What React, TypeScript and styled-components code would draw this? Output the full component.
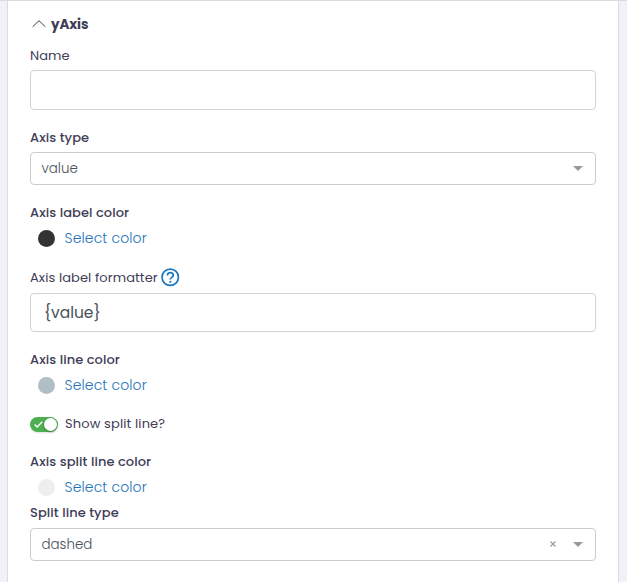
import React from "react";
import styled, { createGlobalStyle } from "styled-components";

const GlobalStyle = createGlobalStyle`
  * { box-sizing: border-box; }
  body {
    margin: 0;
    background: #f1f2f7;
    color: #3f3d56;
    font-family: Poppins, Inter, "Open Sans", sans-serif;
    font-feature-settings: "cv11";
    overflow: hidden;
  }
`;

const Page = styled.div`
  height: 582px;
  padding: 0 8px 0 7px;
  border-top: 1px solid #dcdcdf;
`;

const Panel = styled.main`
  height: 581px;
  padding: 13px 22px 0;
  background: #fff;
  border: solid #dcdcdf;
  border-width: 0 1px;
`;

const Header = styled.header`
  display: flex;
  align-items: center;
  gap: 5px;
  height: 20px;
  padding-left: 2px;
`;

const Title = styled.h2`
  margin: 0;
  padding-top: 2px;
  font-size: 13.5px;
  font-weight: 700;
  line-height: 20px;
  letter-spacing: -0.1px;
`;

const Label = styled.div<{ $top: number; $medium?: boolean }>`
  display: flex;
  align-items: center;
  gap: 3px;
  height: 20px;
  margin-top: ${(p) => p.$top}px;
  font-size: 13px;
  font-weight: ${(p) => (p.$medium ? 500 : 400)};
  letter-spacing: ${(p) => (p.$medium ? 0.07 : 0.09)}px;
  white-space: nowrap;
`;

const Input = styled.input<{ $top: number; $height: number }>`
  display: block;
  width: 100%;
  height: ${(p) => p.$height}px;
  margin-top: ${(p) => p.$top}px;
  padding: 0 13px;
  border: 1px solid #ced4da;
  border-radius: 4px;
  background: #fff;
  color: #495057;
  font: inherit;
  font-feature-settings: inherit;
  font-size: 15.5px;
  letter-spacing: -0.05px;
  outline: none;
`;

const Select = styled.div<{ $top: number }>`
  display: flex;
  align-items: center;
  height: 33px;
  margin-top: ${(p) => p.$top}px;
  padding: 0 12px 0 10.5px;
  border: 1px solid #ccc;
  border-radius: 4px;
  color: #495057;
`;

const SelectValue = styled.span`
  flex: 1;
  font-size: 13.4px;
  font-weight: 300;
`;

const ClearIcon = styled.svg`
  margin: 0 17px 2px 0;
`;

const HelpIcon = styled.svg`
  margin-bottom: 2px;
`;

const ColorRow = styled.div<{ $top: number }>`
  display: flex;
  align-items: center;
  gap: 9.5px;
  height: 20px;
  margin-top: ${(p) => p.$top}px;
  padding-left: 8px;
`;

const Dot = styled.span<{ $color: string }>`
  width: 17px;
  height: 17px;
  border-radius: 50%;
  background: ${(p) => p.$color};
`;

const ColorLink = styled.a`
  color: #2372b9;
  font-size: 14px;
  font-weight: 300;
  line-height: 20px;
  letter-spacing: 0.13px;
`;

const SwitchRow = styled.div`
  display: flex;
  align-items: center;
  gap: 7px;
  height: 20px;
  margin-top: 19px;
`;

const Switch = styled.span`
  display: flex;
  align-items: center;
  justify-content: space-between;
  width: 28px;
  height: 15px;
  padding: 0 1px 0 4px;
  border-radius: 8px;
  background: #4caf50;
  box-shadow: 0 1px 2px rgba(0, 0, 0, 0.12);
`;

const Knob = styled.span`
  width: 13px;
  height: 13px;
  border-radius: 50%;
  background: #fff;
  box-shadow: 0 1px 2px rgba(0, 0, 0, 0.35);
`;

const SwitchText = styled.span`
  font-size: 13px;
  line-height: 18px;
  letter-spacing: 0.13px;
`;

const Caret = () => (
  <svg width="10" height="5" viewBox="0 0 10 5">
    <path d="M0 0h10L5 5z" fill="#999" />
  </svg>
);

const Chevron = () => (
  <svg width="14" height="8" viewBox="0 0 14 8" fill="none" stroke="#3f3d56">
    <path d="M.7 6.7 7 .7l6.3 6" />
  </svg>
);

const Help = () => (
  <HelpIcon width="19" height="19" viewBox="0 0 19 19" fill="none" stroke="#1b78bd">
    <circle cx="9.25" cy="9.25" r="8.2" strokeWidth="1.7" />
    <path d="M6.4 7.5c0-1.8 1.2-2.9 2.9-2.9s3 1.1 3 2.7c0 2-3 2.2-3 4.3" strokeWidth="1.7" />
    <circle cx="9.3" cy="13.8" r="1.1" fill="#1b78bd" stroke="none" />
  </HelpIcon>
);

const Check = () => (
  <svg width="9" height="7" viewBox="0 0 9 7" fill="none" stroke="#fff" strokeWidth="1.4">
    <path d="m.7 3.5 2.4 2.4L8.3.8" />
  </svg>
);

const ColorPicker = ({ color, top }: { color: string; top: number }) => (
  <ColorRow $top={top}>
    <Dot $color={color} />
    <ColorLink>Select color</ColorLink>
  </ColorRow>
);

export default function App() {
  return (
    <>
      <GlobalStyle />
      <Page>
        <Panel>
          <Header>
            <Chevron />
            <Title>yAxis</Title>
          </Header>
          <Label $top={12}>Name</Label>
          <Input $top={4} $height={40} aria-label="Name" />
          <Label $top={18} $medium>Axis type</Label>
          <Select $top={4}>
            <SelectValue>value</SelectValue>
            <Caret />
          </Select>
          <Label $top={18} $medium>Axis label color</Label>
          <ColorPicker color="#333333" top={5} />
          <Label $top={20}>
            Axis label formatter
            <Help />
          </Label>
          <Input $top={5} $height={39} defaultValue="{value}" aria-label="Axis label formatter" />
          <Label $top={18} $medium>Axis line color</Label>
          <ColorPicker color="#b0bec5" top={5} />
          <SwitchRow>
            <Switch>
              <Check />
              <Knob />
            </Switch>
            <SwitchText>Show split line?</SwitchText>
          </SwitchRow>
          <Label $top={18} $medium>Axis split line color</Label>
          <ColorPicker color="#eeeeee" top={5} />
          <Label $top={6} $medium>Split line type</Label>
          <Select $top={5}>
            <SelectValue>dashed</SelectValue>
            <ClearIcon width="6" height="6" viewBox="0 0 6 6" stroke="#999" strokeWidth="1.1">
              <path d="m.5.5 5 5m0-5-5 5" />
            </ClearIcon>
            <Caret />
          </Select>
        </Panel>
      </Page>
    </>
  );
}
